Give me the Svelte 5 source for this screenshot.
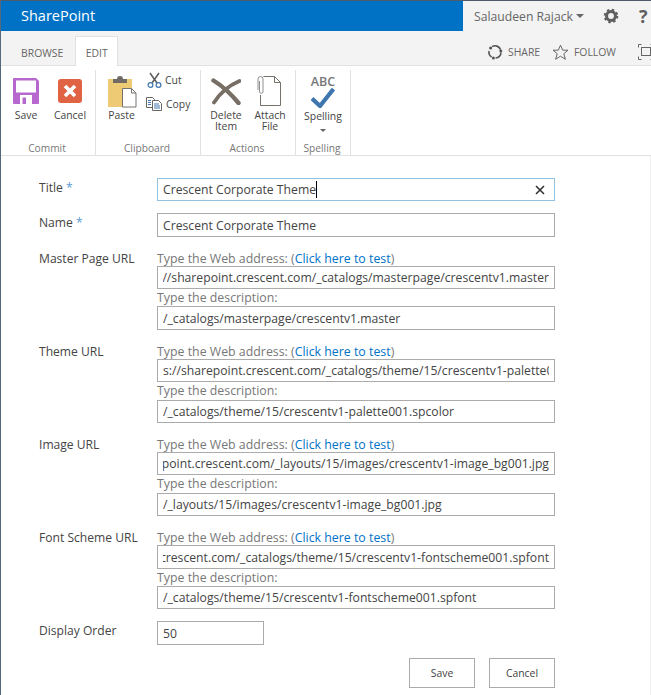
<script>
  const urls = [
    { label: 'Master Page URL', url: 'https://sharepoint.crescent.com/_catalogs/masterpage/crescentv1.master', desc: '/_catalogs/masterpage/crescentv1.master', descTall: true },
    { label: 'Theme URL', url: 's://sharepoint.crescent.com/_catalogs/theme/15/crescentv1-palette001.spcolor', desc: '/_catalogs/theme/15/crescentv1-palette001.spcolor', start: true },
    { label: 'Image URL', url: 'https://sharepoint.crescent.com/_layouts/15/images/crescentv1-image_bg001.jpg', desc: '/_layouts/15/images/crescentv1-image_bg001.jpg' },
    { label: 'Font Scheme URL', url: 'https://sharepoint.crescent.com/_catalogs/theme/15/crescentv1-fontscheme001.spfont', desc: '/_catalogs/theme/15/crescentv1-fontscheme001.spfont', urlTall: true }
  ];
</script>

<div class="page">
  <header class="top">
    <div class="brand">SharePoint</div>
    <div class="user">
      <span class="uname">Salaudeen Rajack</span>
      <span class="caret"></span>
      <svg class="gear" width="16" height="16" viewBox="0 0 18 18">
        <circle cx="9" cy="9" r="5" fill="none" stroke="#5f5f5f" stroke-width="3.4"/>
        <circle cx="9" cy="9" r="6.9" fill="none" stroke="#5f5f5f" stroke-width="2.6" stroke-dasharray="2.7 2.72"/>
      </svg>
      <span class="help">?</span>
    </div>
  </header>

  <nav class="tabs">
    <span class="tab">BROWSE</span>
    <span class="tab active">EDIT</span>
    <div class="actions">
      <svg width="16" height="16" viewBox="0 0 16 16" fill="none" stroke="#555" stroke-width="1.6">
        <path d="M5 2.6A6 6 0 0 1 13.6 5.6"/>
        <path d="M14 8.6A6 6 0 0 1 8.6 14"/>
        <path d="M4.6 13A6 6 0 0 1 2 7"/>
        <circle cx="3.6" cy="3.9" r="1.5" fill="#555" stroke="none"/>
        <circle cx="13.8" cy="7" r="1.5" fill="#555" stroke="none"/>
        <circle cx="6.4" cy="14" r="1.5" fill="#555" stroke="none"/>
      </svg>
      <span class="act share">SHARE</span>
      <svg width="17" height="17" viewBox="0 0 17 17" fill="none" stroke="#666" stroke-width="1">
        <path d="M8.5 1.2l2.2 5h5.3l-4.2 3.5 1.6 5.6-4.9-3.1-4.9 3.1 1.6-5.6L1 6.2h5.3z"/>
      </svg>
      <span class="act follow">FOLLOW</span>
      <svg class="focus" width="16" height="16" viewBox="0 0 16 16" fill="none" stroke="#666" stroke-width="1">
        <path d="M.5 3.5v-3h3M.5 12.500v3h3M12.500 .5h3v3M12.500 15.500h3v-3"/>
        <rect x="3.500" y="3.500" width="9" height="8"/>
      </svg>
    </div>
  </nav>

  <section class="ribbon">
    <div class="group commit">
      <div class="tools">
        <button class="big">
          <svg width="26" height="26" viewBox="0 0 26 26">
            <path d="M1 0h22l3 3v22a1 1 0 0 1-1 1H1a1 1 0 0 1-1-1V1a1 1 0 0 1 1-1z" fill="#b768cf"/>
            <rect x="3" y="2.500" width="20" height="12" fill="#fff"/>
            <rect x="7" y="17" width="12" height="9" fill="#fff"/>
            <rect x="9.500" y="19.500" width="3.500" height="6.500" fill="#b768cf"/>
          </svg>
          <span>Save</span>
        </button>
        <button class="big">
          <svg width="24" height="24" viewBox="0 0 24 24">
            <rect width="24" height="24" rx="3" fill="#e06344"/>
            <path d="M7 7l10 10M17 7L7 17" stroke="#fff" stroke-width="3.600"/>
          </svg>
          <span>Cancel</span>
        </button>
      </div>
      <div class="glabel">Commit</div>
    </div>

    <div class="group clip-group">
      <div class="tools">
        <button class="big paste">
          <svg width="30" height="32" viewBox="0 0 30 32">
            <rect x="1" y="3" width="24" height="28" fill="#efca74"/>
            <path d="M6 3h4a3 3 0 0 1 6 0h4v4H6z" fill="#6f6a66"/>
            <path d="M15.500 12.500h9l4.500 4.500v14h-13.500z" fill="#fff" stroke="#77716b"/>
            <path d="M24.500 12.500v4.500h4.500" fill="none" stroke="#77716b"/>
          </svg>
          <span>Paste</span>
        </button>
        <div class="small-col">
          <button class="small cut">
            <svg width="15" height="16" viewBox="0 0 15 16" fill="none">
              <path d="M3 1l7 10M12 1L5 11" stroke="#5d5d5d" stroke-width="1.500"/>
              <circle cx="3.500" cy="13" r="2.400" stroke="#3f76ae" stroke-width="1.200"/>
              <circle cx="11.500" cy="13" r="2.400" stroke="#3f76ae" stroke-width="1.200"/>
            </svg>
            <span>Cut</span>
          </button>
          <button class="small">
            <svg width="16" height="14" viewBox="0 0 16 14" fill="none" stroke="#666">
              <path d="M.5.500h6l2 2v8H.500z" fill="#fff"/>
              <path d="M6.500 3.500h6l3 3v7h-9z" fill="#fff"/>
              <path d="M2 3.500h3M2 5.500h3M2 7.500h3M8 7h5M8 9h6M8 11h6" stroke="#3f76ae"/>
            </svg>
            <span>Copy</span>
          </button>
        </div>
      </div>
      <div class="glabel">Clipboard</div>
    </div>

    <div class="group actions-group">
      <div class="tools">
        <button class="big tight">
          <svg class="del" width="30" height="27" viewBox="0 0 30 27" fill="none" stroke="#776e66" stroke-linecap="round">
            <path d="M2.500 2.500C9 6.500 20 16 27.500 25" stroke-width="4.400"/>
            <path d="M28.500 3C19 7 9 15 3 24.500" stroke-width="3.800"/>
          </svg>
          <span>Delete<br />Item</span>
        </button>
        <button class="big tight">
          <svg class="att" width="24" height="30" viewBox="0 0 24 30" fill="none" stroke="#77716b">
            <path d="M6.500 .5h11l6 6v23H3.500V19"/>
            <path d="M17.500 .5v6h6"/>
            <path d="M1 14V3a2.500 2.500 0 0 1 5 0v13a1.800 1.800 0 0 1-3.500 0V5" stroke="#8f8f8f"/>
          </svg>
          <span>Attach<br />File</span>
        </button>
      </div>
      <div class="glabel">Actions</div>
    </div>

    <div class="group spelling">
      <div class="tools">
        <button class="big spell">
          <b>ABC</b>
          <svg width="24" height="20" viewBox="0 0 24 20">
            <path d="M1 10.500l8 7.500L22.500 1" fill="none" stroke="#3f76ae" stroke-width="4.200"/>
          </svg>
          <span>Spelling</span>
          <i class="mini"></i>
        </button>
      </div>
      <div class="glabel">Spelling</div>
    </div>
  </section>

  <main class="form">
    <div class="row">
      <div class="label plain">Title <em>*</em></div>
      <div class="input focus-in">
        <div class="clip"><span>Crescent Corporate Theme</span><s class="cursor"></s></div>
        <svg class="clear" width="10" height="10" viewBox="0 0 10 10">
          <path d="M1 1l8 8M9 1L1 9" stroke="#333" stroke-width="1.600"/>
        </svg>
      </div>
    </div>
    <div class="row name">
      <div class="label plain">Name <em>*</em></div>
      <div class="input tall"><div class="clip"><span>Crescent Corporate Theme</span></div></div>
    </div>

    {#each urls as f}
      <div class="row block">
        <div class="label">{f.label}</div>
        <div class="stack">
          <div class="hint first">Type the Web address: (<a href="#top">Click here to test</a>)</div>
          <div class="input" class:tall={f.urlTall}>
            <div class="clip" class:end={!f.start}><span>{f.url}</span></div>
          </div>
          <div class="hint" class:short={f.urlTall || f.descTall}>Type the description:</div>
          <div class="input" class:tall={f.descTall}><div class="clip"><span>{f.desc}</span></div></div>
        </div>
      </div>
    {/each}

    <div class="row order">
      <div class="label plain">Display Order</div>
      <div class="input tall num"><div class="clip"><span>50</span></div></div>
    </div>

    <div class="buttons">
      <button class="btn">Save</button>
      <button class="btn">Cancel</button>
    </div>
  </main>
</div>

<style>
  :global(body) {
    margin: 0;
    background: #fff;
  }
  .page {
    box-sizing: border-box;
    position: relative;
    width: 651px;
    height: 695px;
    overflow: hidden;
    border-top: 1px solid #4d5b6b;
    border-left: 1px solid #56687d;
    font-family: "Open Sans", "Noto Sans", sans-serif;
    font-size: 12px;
    color: #444;
  }
  button {
    font: inherit;
    color: inherit;
    background: none;
    border: 0;
    padding: 0;
  }

  .top {
    display: flex;
    height: 30px;
    background: #f3f3f3;
  }
  .brand {
    width: 462px;
    box-sizing: border-box;
    padding-left: 20px;
    background: #0072c6;
    color: #fff;
    font-size: 14.500px;
    line-height: 30px;
  }
  .user {
    display: flex;
    align-items: center;
    padding-left: 11px;
    color: #666;
  }
  .uname {
    font-size: 12.200px;
    width: 102px;
    white-space: nowrap;
  }
  .caret {
    width: 0;
    height: 0;
    border: 4px solid transparent;
    border-top-color: #666;
    border-bottom: 0;
  }
  .gear {
    margin-left: 19px;
  }
  .help {
    margin-left: 20px;
    font-size: 18px;
    font-weight: 700;
    color: #5f5f5f;
  }

  .tabs {
    display: flex;
    align-items: flex-end;
    height: 34px;
    padding-left: 9px;
    background: #f3f3f3;
    border-bottom: 1px solid #e1e1e1;
    font-size: 10.400px;
    color: #666;
  }
  .tab {
    box-sizing: border-box;
    height: 30px;
    margin-bottom: -1px;
    padding: 0 11px;
    line-height: 34px;
    white-space: nowrap;
  }
  .tab.active {
    width: 43px;
    margin-left: 1px;
    padding: 0;
    text-align: center;
    background: #fff;
    border: 1px solid #e1e1e1;
    border-bottom: 0;
    line-height: 32px;
  }
  .actions {
    box-sizing: border-box;
    display: flex;
    align-items: center;
    height: 34px;
    padding-top: 8px;
    margin-left: auto;
    margin-right: -3px;
    font-size: 10.400px;
    white-space: nowrap;
  }
  .act.share {
    width: 44px;
    margin-left: 5px;
  }
  .act.follow {
    width: 64px;
    margin-left: 5px;
  }

  .ribbon {
    display: flex;
    height: 89px;
    border-bottom: 1px solid #e1e1e1;
    color: #444;
    font-size: 10.400px;
  }
  .group {
    display: flex;
    flex-direction: column;
    margin-top: 4px;
    border-right: 1px solid #e1e1e1;
  }
  .tools {
    display: flex;
    flex: 1;
  }
  .glabel {
    height: 14px;
    padding-right: 2px;
    line-height: 14px;
    text-align: center;
    color: #777;
    font-size: 10.200px;
  }
  .commit {
    width: 94px;
  }
  .commit .tools {
    padding-left: 3px;
  }
  .clip-group {
    width: 104px;
  }
  .actions-group {
    width: 94px;
  }
  .spelling {
    width: 54px;
  }
  .big {
    display: flex;
    flex-direction: column;
    align-items: center;
    width: 44px;
    padding-top: 8px;
    line-height: 11px;
  }
  .big svg {
    height: 26px;
    margin-bottom: 6px;
  }
  .paste {
    width: 50px;
    padding-left: 1px;
    padding-top: 6px;
  }
  .paste svg {
    height: 32px;
    margin-bottom: 2px;
  }
  .small-col {
    display: flex;
    flex-direction: column;
    gap: 9px;
    padding-top: 2px;
  }
  .small {
    display: flex;
    align-items: center;
    gap: 4px;
    height: 15px;
  }
  .cut svg {
    margin-left: 1px;
    margin-right: -1px;
  }
  .actions-group .tools {
    padding-left: 3px;
  }
  .tight {
    padding-top: 6px;
  }
  .big .del {
    height: 27px;
    margin: 2px 0 5px;
  }
  .big .att {
    height: 30px;
    margin: 0 2px 4px 0;
  }
  .spell {
    width: 54px;
    padding-top: 5px;
  }
  .spell b {
    font-family: "Open Sans", sans-serif;
    font-size: 12.500px;
    font-weight: 600;
    color: #777;
    line-height: 13px;
  }
  .spell svg {
    height: 20px;
    margin: 0 0 3px;
  }
  .mini {
    width: 0;
    height: 0;
    margin-top: 7px;
    border: 3px solid transparent;
    border-top-color: #666;
    border-bottom: 0;
  }

  .form {
    display: flex;
    flex-direction: column;
    height: 539px;
    box-sizing: border-box;
    padding: 22px 0 0 38px;
    border-right: 1px solid #f0f0f0;
  }
  .row {
    display: grid;
    grid-template-columns: 118px 398px;
    margin-bottom: 12px;
  }
  .row.name,
  .row.block {
    margin-bottom: 13px;
  }
  .label {
    font-size: 12.100px;
    line-height: 18px;
    white-space: nowrap;
  }
  .label.plain {
    padding-top: 1px;
  }
  .label em {
    color: #5a9bd4;
    font-style: normal;
  }
  .stack {
    display: flex;
    flex-direction: column;
  }
  .hint {
    height: 18px;
    line-height: 17px;
    color: #777;
    font-size: 12.350px;
    white-space: nowrap;
  }
  .hint.first {
    height: 16px;
    line-height: 17px;
  }
  .hint.short {
    height: 17px;
  }
  .hint a {
    color: #0072c6;
    text-decoration: none;
  }
  .input {
    position: relative;
    box-sizing: border-box;
    display: flex;
    align-items: center;
    height: 23px;
    padding: 0 5px;
    background: #fff;
    border: 1px solid #ababab;
    font-size: 12.200px;
    color: #444;
  }
  .input.tall {
    height: 24px;
  }
  .focus-in {
    border-color: #92c0e0;
  }
  .clip {
    display: flex;
    flex: 1;
    min-width: 0;
    overflow: hidden;
    white-space: nowrap;
    line-height: 17px;
  }
  .clip.end {
    justify-content: flex-end;
  }
  .clip span {
    flex: none;
  }
  .cursor {
    flex: none;
    width: 1px;
    height: 17px;
    background: #000;
  }
  .clear {
    position: absolute;
    right: 9px;
    top: 6px;
  }
  .num {
    width: 107px;
  }
  .order {
    margin-top: -1px;
    margin-bottom: 13px;
  }
  .buttons {
    display: flex;
    justify-content: flex-end;
    gap: 14px;
    width: 516px;
  }
  .btn {
    box-sizing: border-box;
    width: 66px;
    height: 30px;
    border: 1px solid #ababab;
    font-size: 10.400px;
    color: #444;
  }
</style>
